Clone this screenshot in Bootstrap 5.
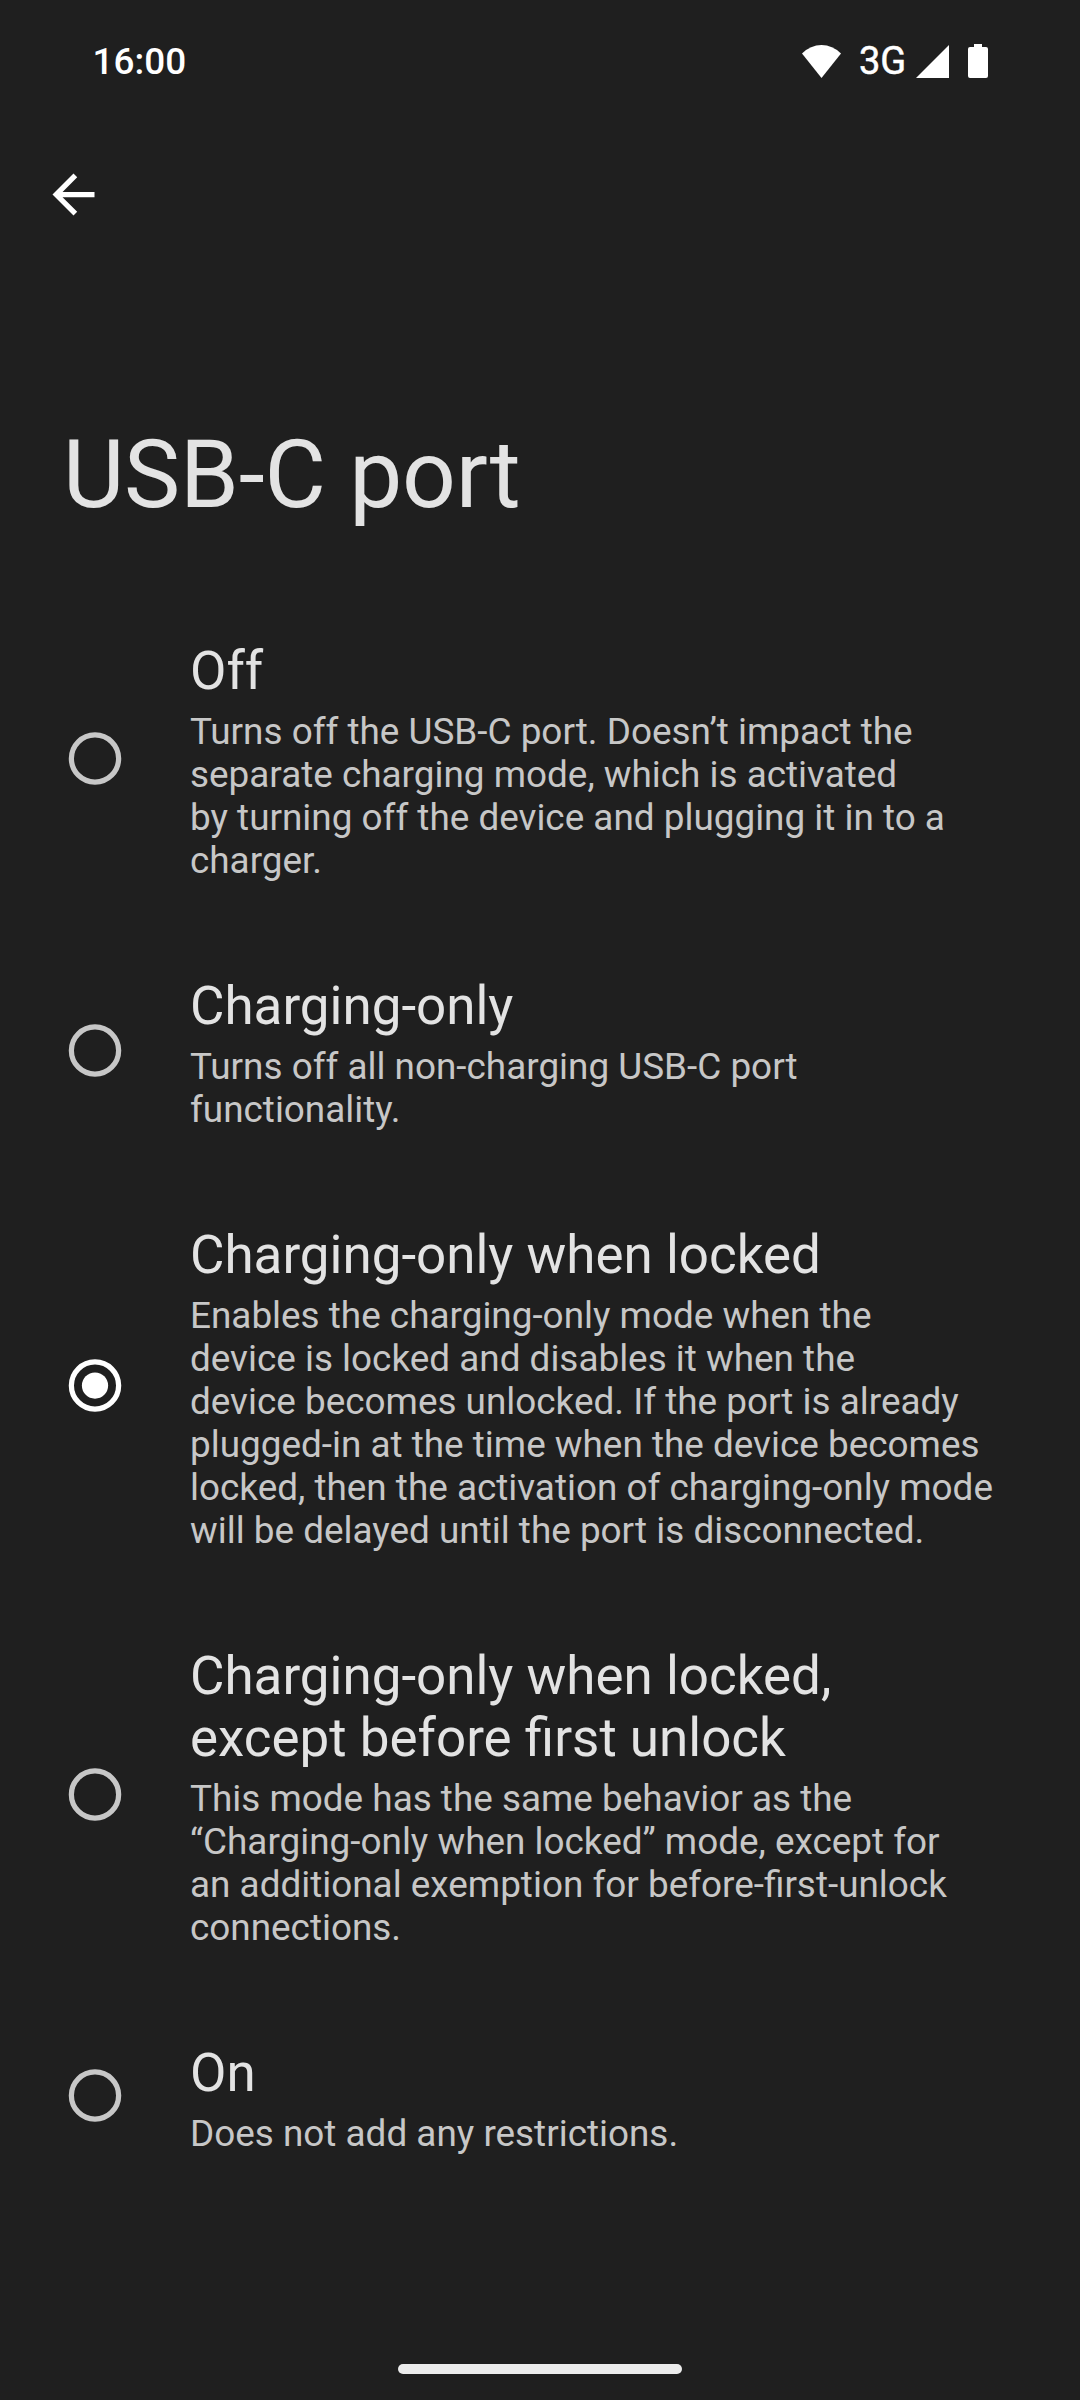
<!DOCTYPE html>
<html lang="en">
<head>
<meta charset="utf-8">
<meta name="viewport" content="width=device-width, initial-scale=1">
<title>USB-C port</title>
<link rel="stylesheet" href="https://cdn.jsdelivr.net/npm/bootstrap@5.3.0/dist/css/bootstrap.min.css">
<style>
html,body{height:2400px;overflow:hidden}
body{background:#1f1f1f;color:#e3e3e3;font-family:Roboto,sans-serif}
.status-bar{height:122px;padding:0 92px 0 92.5px;color:#fff;font-size:36.9px;line-height:42px;font-weight:500}
.clock{padding-top:1px}
.network{width:45px;margin:0 11px 0 19px;font-size:38px;font-weight:400;text-align:center}
.network span{margin:0 -5px;-webkit-text-stroke:.5px #fff}
.battery{margin-left:19px}
.back-bar{height:144px;padding-left:42px}
.back-bar svg,.status-bar svg,.choice svg{display:block;flex:none}
.page-title{margin:149px 0 0 63px;font-size:94.5px;line-height:120px;font-weight:400;letter-spacing:-.2px}
.choices{margin-top:56px}
.choice{padding:49px 63px 44px 63px}
.choice-icon{width:127px;padding:0 0 6px}
.choice-icon svg{width:64px;height:63px}
.choice-name{font-size:52.95px;line-height:62px;font-weight:400;margin:0 0 8px}
.choice-text{font-size:36.88px;line-height:43px;color:#c7c7c7;margin:0;white-space:nowrap}
.home-pill{width:284px;height:10px;background:#ececec;bottom:26px;left:398px}
</style>
</head>
<body class="position-relative">
<svg class="d-none">
<symbol id="radio-off" viewBox="0 0 24 24"><circle cx="12" cy="12" r="9" fill="none" stroke="#c7c7c7" stroke-width="2"/></symbol>
<symbol id="radio-on" viewBox="0 0 24 24"><circle cx="12" cy="12" r="9" fill="none" stroke="#fff" stroke-width="2"/><circle cx="12" cy="12" r="5" fill="#fff"/></symbol>
</svg>
<header class="status-bar d-flex align-items-center justify-content-between">
<span class="clock">16:00</span>
<div class="d-flex align-items-center">
<svg width="39" height="33" viewBox="0 0 39 33" fill="#fff"><path d="M19.5 33 0 8.5Q8.5 0 19.5 0T39 8.5Z"/></svg>
<div class="network d-flex justify-content-center"><span>3G</span></div>
<svg width="33" height="33" viewBox="0 0 33 33" fill="#fff"><path d="M33 0V33H0Z"/></svg>
<svg class="battery" width="20" height="34" viewBox="0 0 20 34" fill="#fff"><path d="M6 0h8v3h4q2 0 2 2v27q0 2-2 2H2q-2 0-2-2V5q0-2 2-2h4Z"/></svg>
</div>
</header>
<nav class="back-bar d-flex align-items-center">
<svg width="63" height="63" viewBox="0 0 24 24" fill="#fff"><path d="M20 11H7.83l5.59-5.59L12 4l-8 8 8 8 1.41-1.41L7.83 13H20Z"/></svg>
</nav>
<h1 class="page-title">USB-C port</h1>
<main class="choices d-flex flex-column" role="radiogroup">
<div class="choice d-flex align-items-center" role="radio" aria-checked="false">
<div class="choice-icon"><svg><use href="#radio-off"/></svg></div>
<div><h2 class="choice-name">Off</h2><p class="choice-text">Turns off the USB-C port. Doesn’t impact the<br>separate charging mode, which is activated<br>by turning off the device and plugging it in to a<br>charger.</p></div>
</div>
<div class="choice d-flex align-items-center" role="radio" aria-checked="false">
<div class="choice-icon"><svg><use href="#radio-off"/></svg></div>
<div><h2 class="choice-name">Charging-only</h2><p class="choice-text">Turns off all non-charging USB-C port<br>functionality.</p></div>
</div>
<div class="choice d-flex align-items-center" role="radio" aria-checked="true">
<div class="choice-icon"><svg><use href="#radio-on"/></svg></div>
<div><h2 class="choice-name">Charging-only when locked</h2><p class="choice-text">Enables the charging-only mode when the<br>device is locked and disables it when the<br>device becomes unlocked. If the port is already<br>plugged-in at the time when the device becomes<br>locked, then the activation of charging-only mode<br>will be delayed until the port is disconnected.</p></div>
</div>
<div class="choice d-flex align-items-center" role="radio" aria-checked="false">
<div class="choice-icon"><svg><use href="#radio-off"/></svg></div>
<div><h2 class="choice-name">Charging-only when locked,<br>except before first unlock</h2><p class="choice-text">This mode has the same behavior as the<br>“Charging-only when locked” mode, except for<br>an additional exemption for before-first-unlock<br>connections.</p></div>
</div>
<div class="choice d-flex align-items-center" role="radio" aria-checked="false">
<div class="choice-icon"><svg><use href="#radio-off"/></svg></div>
<div><h2 class="choice-name">On</h2><p class="choice-text">Does not add any restrictions.</p></div>
</div>
</main>
<div class="home-pill position-absolute rounded-pill"></div>
<script src="https://cdn.jsdelivr.net/npm/bootstrap@5.3.0/dist/js/bootstrap.bundle.min.js"></script>
</body>
</html>
